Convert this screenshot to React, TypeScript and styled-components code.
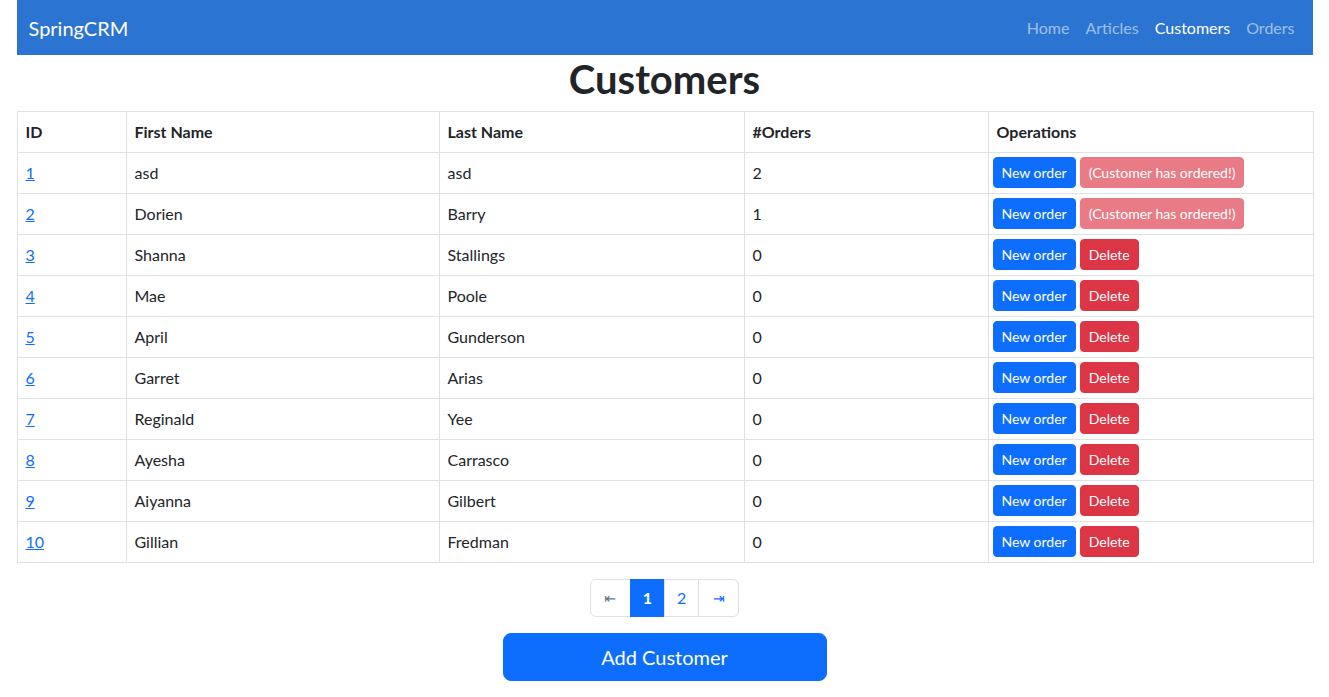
import React from "react";
import styled, { createGlobalStyle } from "styled-components";

const Global = createGlobalStyle`
  *, *::before, *::after { box-sizing: border-box; }
  body {
    margin: 0;
    background: #fff;
    color: #212529;
    font-family: Lato, "DejaVu Sans", sans-serif;
    font-size: 16px;
    line-height: 1.5;
  }
`;

const Container = styled.div`
  width: 1296px;
  margin: 0 auto;
`;

const Navbar = styled.nav`
  height: 55px;
  background: #2c74d1;
  display: flex;
  align-items: center;
  justify-content: space-between;
  padding: 0 10px 0 12px;
`;

const Brand = styled.a`
  font-size: 20px;
  line-height: 30px;
  color: #fff;
  text-decoration: none;
`;

const NavList = styled.ul`
  display: flex;
  list-style: none;
  margin: 0;
  padding: 0;
`;

const NavLink = styled.a<{ $active?: boolean }>`
  display: block;
  padding: 8px;
  color: ${(p) => (p.$active ? "#fff" : "rgba(255,255,255,0.55)")};
  text-decoration: none;
`;

const Title = styled.h1`
  margin: 0 0 8px;
  font-size: 40px;
  font-weight: 700;
  line-height: 48px;
  text-align: center;
`;

const Table = styled.table`
  width: 100%;
  table-layout: fixed;
  border-collapse: collapse;
  margin-bottom: 16px;
`;

const Th = styled.th<{ $w: number }>`
  width: ${(p) => p.$w}px;
  text-align: left;
  font-weight: 700;
  padding: 8px;
  border: 1px solid #dee2e6;
`;

const Td = styled.td<{ $tight?: boolean }>`
  padding: ${(p) => (p.$tight ? "4px 4px 5px" : "8px")};
  vertical-align: top;
  border: 1px solid #dee2e6;
  white-space: nowrap;
`;

const IdLink = styled.a`
  color: #0d6efd;
  text-decoration: underline;
`;

const Ops = styled.div`
  display: flex;
  gap: 4px;
`;

const SmallBtn = styled.button<{ $variant: "primary" | "danger" }>`
  font-family: inherit;
  font-size: 14px;
  line-height: 21px;
  padding: 4px 8px;
  border-radius: 4px;
  border: 1px solid ${(p) => (p.$variant === "primary" ? "#0d6efd" : "#dc3545")};
  background: ${(p) => (p.$variant === "primary" ? "#0d6efd" : "#dc3545")};
  color: #fff;
  cursor: pointer;
  &:disabled {
    opacity: 0.65;
    cursor: default;
  }
`;

const Pager = styled.ul`
  display: flex;
  justify-content: center;
  list-style: none;
  margin: 0 0 16px;
  padding: 0;
`;

const PageItem = styled.li`
  margin-left: -1px;
  &:first-child { margin-left: 0; }
  &:first-child > * { border-radius: 6px 0 0 6px; }
  &:last-child > * { border-radius: 0 6px 6px 0; }
`;

const PageLink = styled.a<{ $active?: boolean; $disabled?: boolean }>`
  display: block;
  height: 38px;
  padding: 6px 12px;
  line-height: 24px;
  text-decoration: none;
  border: 1px solid ${(p) => (p.$active ? "#0d6efd" : "#dee2e6")};
  background: ${(p) => (p.$active ? "#0d6efd" : "#fff")};
  color: ${(p) => (p.$active ? "#fff" : p.$disabled ? "#6c757d" : "#0d6efd")};
  font-weight: ${(p) => (p.$active ? 700 : 400)};
`;

const Arrow = styled.span`
  display: inline-block;
  width: 15px;
  text-align: center;
  font-family: "DejaVu Sans", sans-serif;
  font-size: 14px;
  line-height: 24px;
  vertical-align: top;
`;

const Footer = styled.div`
  display: flex;
  justify-content: center;
`;

const BigBtn = styled.button`
  width: 25%;
  height: 48px;
  font-family: inherit;
  font-size: 20px;
  line-height: 30px;
  padding: 8px 16px;
  border-radius: 8px;
  border: 1px solid #0d6efd;
  background: #0d6efd;
  color: #fff;
  cursor: pointer;
`;

const customers = [
  { id: 1, first: "asd", last: "asd", orders: 2 },
  { id: 2, first: "Dorien", last: "Barry", orders: 1 },
  { id: 3, first: "Shanna", last: "Stallings", orders: 0 },
  { id: 4, first: "Mae", last: "Poole", orders: 0 },
  { id: 5, first: "April", last: "Gunderson", orders: 0 },
  { id: 6, first: "Garret", last: "Arias", orders: 0 },
  { id: 7, first: "Reginald", last: "Yee", orders: 0 },
  { id: 8, first: "Ayesha", last: "Carrasco", orders: 0 },
  { id: 9, first: "Aiyanna", last: "Gilbert", orders: 0 },
  { id: 10, first: "Gillian", last: "Fredman", orders: 0 },
];

const cols: [string, number][] = [
  ["ID", 109],
  ["First Name", 313],
  ["Last Name", 305],
  ["#Orders", 244],
  ["Operations", 325],
];

export default function App() {
  return (
    <>
      <Global />
      <Container>
        <Navbar>
          <Brand href="#">SpringCRM</Brand>
          <NavList>
            <li><NavLink href="#">Home</NavLink></li>
            <li><NavLink href="#">Articles</NavLink></li>
            <li><NavLink href="#" $active>Customers</NavLink></li>
            <li><NavLink href="#">Orders</NavLink></li>
          </NavList>
        </Navbar>
        <Title>Customers</Title>
        <Table>
          <thead>
            <tr>
              {cols.map(([label, w]) => (
                <Th key={label} $w={w}>{label}</Th>
              ))}
            </tr>
          </thead>
          <tbody>
            {customers.map((c) => (
              <tr key={c.id}>
                <Td><IdLink href="#">{c.id}</IdLink></Td>
                <Td>{c.first}</Td>
                <Td>{c.last}</Td>
                <Td>{c.orders}</Td>
                <Td $tight>
                  <Ops>
                    <SmallBtn $variant="primary">New order</SmallBtn>
                    {c.orders > 0 ? (
                      <SmallBtn $variant="danger" disabled>(Customer has ordered!)</SmallBtn>
                    ) : (
                      <SmallBtn $variant="danger">Delete</SmallBtn>
                    )}
                  </Ops>
                </Td>
              </tr>
            ))}
          </tbody>
        </Table>
        <Pager>
          <PageItem><PageLink $disabled><Arrow>⇤</Arrow></PageLink></PageItem>
          <PageItem><PageLink href="#" $active>1</PageLink></PageItem>
          <PageItem><PageLink href="#">2</PageLink></PageItem>
          <PageItem><PageLink href="#"><Arrow>⇥</Arrow></PageLink></PageItem>
        </Pager>
        <Footer>
          <BigBtn>Add Customer</BigBtn>
        </Footer>
      </Container>
    </>
  );
}
